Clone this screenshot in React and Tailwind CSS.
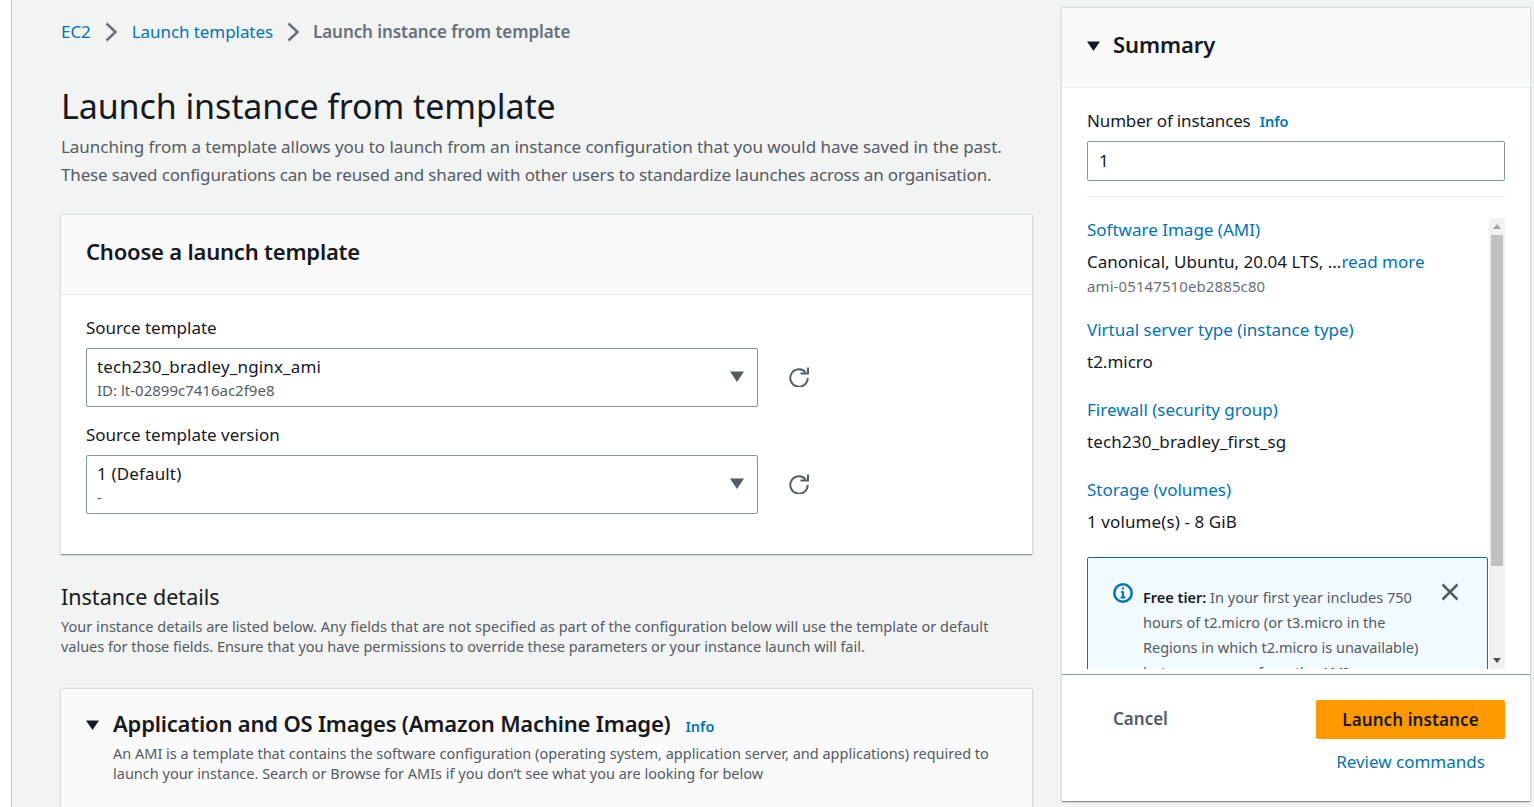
import React from "react";

const Caret = ({ className }) => (
  <svg viewBox="0 0 14 11" preserveAspectRatio="none" className={className} aria-hidden="true">
    <path d="M0 0.500h14L7 11z" fill="currentColor" />
  </svg>
);

const Chevron = () => (
  <svg viewBox="0 0 13 20" className="h-[20px] w-[13px] text-[#687078]" fill="none" stroke="currentColor" strokeWidth="2.500">
    <path d="M1.500 1.500 10.500 10l-9 8.500" />
  </svg>
);

const Refresh = () => (
  <svg viewBox="0 0 20 20" className="mb-[2px] h-[20px] w-[20px] text-[#545b64]" fill="none" stroke="currentColor" strokeWidth="2">
    <path d="M16.600 5.300A8.700 8.700 0 1 0 18.700 11" />
    <path d="M19 0.500V6.500h-7.500" />
  </svg>
);

const SelectBox = ({ title, sub }) => (
  <div className="flex items-center gap-[31px]">
    <div className="flex h-[59px] w-[672px] items-center justify-between rounded-[2px] border border-[#879596] bg-white pl-[10px] pr-[13px]">
      <div>
        <div className="text-[17px] leading-[24px] tracking-[0.15px] text-[#16191f]">{title}</div>
        <div className="text-[15px] leading-[22px] text-[#545b64]">{sub}</div>
      </div>
      <Caret className="mb-[2px] h-[11px] w-[14px] text-[#545b64]" />
    </div>
    <Refresh />
  </div>
);

const Item = ({ title, children, className }) => (
  <div className={className}>
    <div className="text-[17px] leading-[24px] text-[#0073bb]">{title}</div>
    {children}
  </div>
);

export default function App() {
  return (
    <div className="flex h-[807px] w-[1534px] overflow-hidden bg-[#f2f3f3] font-['Noto_Sans',sans-serif] text-[#16191f]">
      <div className="w-[11px] shrink-0 bg-white" />
      <div className="w-[1px] shrink-0 bg-[#c4c8c8]" />
      <main className="w-[1050px] shrink-0 pl-[49px] pr-[30px]">
        <nav className="mt-[20px] flex h-[24px] items-center text-[17px] tracking-[-0.07px]">
          <span className="text-[#0073bb]">EC2</span>
          <span className="mx-[14px] flex"><Chevron /></span>
          <span className="text-[#0073bb]">Launch templates</span>
          <span className="ml-[14px] mr-[13px] flex"><Chevron /></span>
          <span className="font-semibold text-[#687078]">Launch instance from template</span>
        </nav>

        <h1 className="mt-[38px] text-[34px] leading-[48px] font-normal tracking-[-0.1px]">Launch instance from template</h1>
        <p className="mt-[3px] text-[17px] leading-[28px] text-[#545b64]">
          <span className="tracking-[-0.04px]">Launching from a template allows you to launch from an instance configuration that you would have saved in the past.</span>
          <br />
          <span className="tracking-[-0.15px]">These saved configurations can be reused and shared with other users to standardize launches across an organisation.</span>
        </p>

        <section className="mt-[26px] h-[340px] border-b border-b-[#879596] bg-white shadow-[0_0_2px_rgba(0,28,36,0.35)]">
          <div className="flex h-[80px] items-center border-b border-[#eaeded] bg-[#fafafa] px-[25px] pb-[6px]">
            <h2 className="text-[22px] font-semibold tracking-[-0.2px]">Choose a launch template</h2>
          </div>
          <div className="px-[25px] pt-[21px]">
            <div className="mb-[8px] text-[17px] leading-[24px]">Source template</div>
            <SelectBox title="tech230_bradley_nginx_ami" sub="ID: lt-02899c7416ac2f9e8" />
            <div className="mb-[8px] mt-[16px] text-[17px] leading-[24px]">Source template version</div>
            <SelectBox title="1 (Default)" sub="-" />
          </div>
        </section>

        <h3 className="mt-[27px] text-[21.500px] leading-[30px] font-normal">Instance details</h3>
        <p className="mt-[4px] text-[14.500px] leading-[20px] text-[#545b64]">
          <span className="tracking-[0.03px]">Your instance details are listed below. Any fields that are not specified as part of the configuration below will use the template or default</span>
          <br />
          <span className="tracking-[-0.03px]">values for those fields. Ensure that you have permissions to override these parameters or your instance launch will fail.</span>
        </p>

        <section className="mt-[33px] h-[200px] bg-[#fafafa] shadow-[0_0_2px_rgba(0,28,36,0.35)]">
          <div className="flex pl-[25px] pt-[19px]">
            <Caret className="mt-[12px] h-[10px] w-[13px] text-[#16191f]" />
            <div className="ml-[14px]">
              <div className="flex items-baseline">
                <h2 className="text-[22px] leading-[30px] font-semibold tracking-[-0.2px]">Application and OS Images (Amazon Machine Image)</h2>
                <span className="ml-[15px] text-[14.500px] font-semibold text-[#0073bb]">Info</span>
              </div>
              <p className="mt-[5px] text-[14.500px] leading-[20px] text-[#545b64]">
                An AMI is a template that contains the software configuration (operating system, application server, and applications) required to
                <br />
                launch your instance. Search or Browse for AMIs if you don’t see what you are looking for below
              </p>
            </div>
          </div>
        </section>
      </main>

      <aside className="mt-[8px] flex h-[794px] w-[468px] shrink-0 flex-col border-b border-b-[#879596] bg-white shadow-[0_0_2px_rgba(0,28,36,0.35)]">
        <div className="flex h-[80px] shrink-0 items-center border-b border-[#eaeded] bg-[#fafafa] pb-[6px] pl-[25px]">
          <Caret className="mt-[2px] h-[10px] w-[13px] text-[#16191f]" />
          <h2 className="ml-[13px] text-[22px] font-semibold tracking-[-0.1px]">Summary</h2>
        </div>
        <div className="flex-1 overflow-hidden px-[25px]">
          <div className="mt-[21px] flex items-baseline">
            <span className="text-[17px] leading-[24px] tracking-[-0.15px]">Number of instances</span>
            <span className="ml-[9px] text-[14.500px] font-semibold text-[#0073bb]">Info</span>
          </div>
          <div className="mt-[8px] flex h-[40px] items-center rounded-[2px] border border-[#879596] pl-[11px] text-[17px]">1</div>
          <div className="mt-[15px] h-[1px] bg-[#eaeded]" />
          <div className="mt-[21px] flex h-[451px]">
            <div className="h-full flex-1 overflow-hidden">
              <Item title="Software Image (AMI)">
                <div className="mt-[8px] text-[17px] leading-[24px]">
                  Canonical, Ubuntu, 20.04 LTS, ...<span className="text-[#0073bb]">read more</span>
                </div>
                <div className="mt-[2px] text-[15px] leading-[20px] tracking-[0.1px] text-[#687078]">ami-05147510eb2885c80</div>
              </Item>
              <Item title="Virtual server type (instance type)" className="mt-[22px]">
                <div className="mt-[8px] text-[17px] leading-[24px]">t2.micro</div>
              </Item>
              <Item title="Firewall (security group)" className="mt-[24px]">
                <div className="mt-[8px] text-[17px] leading-[24px] tracking-[0.15px]">tech230_bradley_first_sg</div>
              </Item>
              <Item title="Storage (volumes)" className="mt-[24px]">
                <div className="mt-[8px] text-[17px] leading-[24px] tracking-[0.1px]">1 volume(s) - 8 GiB</div>
              </Item>
              <div className="mt-[23px] flex rounded-[2px] border border-[#0073bb] bg-[#f1faff] pb-[20px] pl-[25px] pt-[25px]">
                <svg viewBox="0 0 20 20" className="h-[20px] w-[20px] shrink-0 text-[#0073bb]" fill="none" stroke="currentColor">
                  <circle cx="10" cy="10" r="8.700" strokeWidth="2.500" />
                  <path d="M10 8.500v6M7.500 14.500h5M8 9h2" strokeWidth="2" />
                  <path d="M9 4.500h2v2H9z" fill="currentColor" strokeWidth="0" />
                </svg>
                <div className="ml-[10px] mt-[2px] w-[276px] text-[14.500px] leading-[25px] text-[#16191f]">
                  <b className="font-semibold">Free tier:</b>{" "}
                  <span className="text-[#545b64]">In your first year includes 750 hours of t2.micro (or t3.micro in the Regions in which t2.micro is unavailable) but one or more from the AMI</span>
                </div>
                <svg viewBox="0 0 18 18" className="ml-[22px] h-[18px] w-[18px] shrink-0 text-[#545b64]" fill="none" stroke="currentColor" strokeWidth="2.500">
                  <path d="M1.500 1.500l15 15M16.500 1.500l-15 15" />
                </svg>
              </div>
            </div>
            <div className="ml-[1px] flex h-full w-[16px] shrink-0 flex-col bg-[#f1f1f1]">
              <div className="flex h-[17px] items-center justify-center">
                <svg viewBox="0 0 8 5" className="h-[5px] w-[8px] text-[#a3a3a3]"><path d="M0 5 4 0l4 5z" fill="currentColor" /></svg>
              </div>
              <div className="mx-[2px] h-[331px] bg-[#c1c1c1]" />
              <div className="flex-1" />
              <div className="flex h-[17px] items-center justify-center">
                <svg viewBox="0 0 8 5" className="h-[5px] w-[8px] text-[#505050]"><path d="M0 0l4 5 4-5z" fill="currentColor" /></svg>
              </div>
            </div>
          </div>
        </div>
        <div className="h-[127px] shrink-0 border-t border-[#879596] bg-white">
          <div className="flex items-start justify-between pl-[51px] pr-[25px] pt-[25px]">
            <span className="mt-[6px] text-[17px] font-semibold text-[#545b64]">Cancel</span>
            <div className="flex flex-col items-center">
              <div className="flex h-[39px] w-[189px] items-center justify-center rounded-[2px] bg-[#ff9900] text-[17px] font-semibold tracking-[0.1px] text-[#16191f]">Launch instance</div>
              <span className="mt-[11px] text-[17px] leading-[24px] text-[#0073bb]">Review commands</span>
            </div>
          </div>
        </div>
      </aside>
    </div>
  );
}
